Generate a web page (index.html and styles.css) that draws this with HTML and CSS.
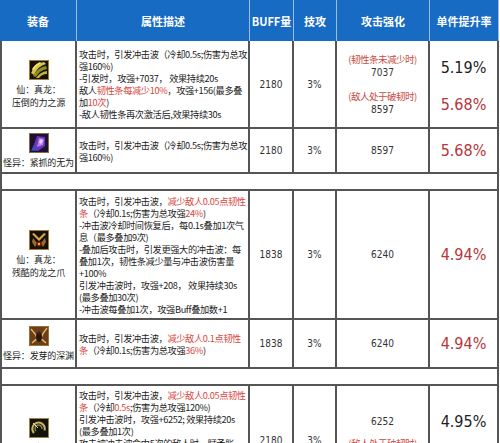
FILE: index.html
```html
<!DOCTYPE html>
<html lang="zh-CN">
<head>
<meta charset="utf-8">
<title>装备属性对比</title>
<link rel="stylesheet" href="styles.css">
</head>
<body>
<div class="page">
<table class="sheet">
  <colgroup>
    <col class="c-eq"><col class="c-desc"><col class="c-buff"><col class="c-skill"><col class="c-atk"><col class="c-rate">
  </colgroup>
  <thead>
    <tr>
      <th>装备</th><th>属性描述</th><th>BUFF量</th><th>技攻</th><th>攻击强化</th><th>单件提升率</th>
    </tr>
  </thead>
  <tbody>
    <tr class="r1">
      <td class="eq">
        <svg class="icon" viewBox="0 0 20 20"><rect x="0.5" y="0.5" width="19" height="19" fill="#16120a" stroke="#a2802e"/><path d="M2 13 Q7 3 15 2 L17 4 Q9 6 5 15 Z" fill="#d8c445"/><path d="M4 16 Q9 7 17 6 L18 9 Q11 10 7 17 Z" fill="#8f8c25"/><path d="M7 18 Q11 12 18 11 L18 14 Q13 14 10 18 Z" fill="#c7b23a"/><path d="M3 9 Q6 4 11 2 L12 3 Q7 6 4 11 Z" fill="#f0e27a"/></svg>
        <div class="name">仙：真龙：<br>压倒的力之源</div>
      </td>
      <td class="desc">攻击时，引发冲击波（冷却0.5s;伤害为总攻<br>强160%)<br>-引发时，攻强+7037， 效果持续20s<br>敌人<span class="hl">韧性条每减少10%</span>，攻强+156(最多叠<br>加<span class="hl">10次</span>)<br>-敌人韧性条再次激活后,效果持续30s</td>
      <td class="num">2180</td>
      <td class="num">3%</td>
      <td class="atk">
        <div class="stack">
          <div class="grp"><div class="note">(韧性条未减少时)</div><div class="val">7037</div></div>
          <div class="grp"><div class="note">(敌人处于破韧时)</div><div class="val">8597</div></div>
        </div>
      </td>
      <td class="rate">
        <div class="pcts"><div class="pct">5.19%</div><div class="pct up">5.68%</div></div>
      </td>
    </tr>
    <tr class="r2">
      <td class="eq">
        <svg class="icon" viewBox="0 0 20 20"><rect x="0.5" y="0.5" width="19" height="19" fill="#1d1132" stroke="#8a6a3e"/><polygon points="3,17 8,3 16,4 16,13 9,18" fill="#6d34b8"/><polygon points="8,14 10,5 15,6 14,12" fill="#b883ee"/><polygon points="10,9 12,6 14,8 12,11" fill="#e8d2ff"/><polygon points="2,18 5,12 9,17" fill="#3b4fc8"/></svg>
        <div class="name">怪异：紧抓的无为</div>
      </td>
      <td class="desc">攻击时，引发冲击波（冷却0.5s;伤害为总攻<br>强160%)</td>
      <td class="num">2180</td>
      <td class="num">3%</td>
      <td class="num">8597</td>
      <td class="rate"><div class="pct up">5.68%</div></td>
    </tr>
    <tr class="gap"><td colspan="6"></td></tr>
    <tr class="r3">
      <td class="eq">
        <svg class="icon" viewBox="0 0 20 20"><rect x="0.5" y="0.5" width="19" height="19" fill="#16100a" stroke="#a47a30"/><path d="M3 4 L10 11 L17 4 L15 3 L10 8 L5 3 Z" fill="#d9a441"/><path d="M4 8 L8 13 L6 17 L3 12 Z" fill="#9a6a26"/><path d="M16 8 L12 13 L14 17 L17 12 Z" fill="#9a6a26"/><circle cx="10" cy="14" r="2.6" fill="#7a1a10"/><circle cx="10" cy="14" r="1.2" fill="#e0b050"/></svg>
        <div class="name">仙：真龙：<br>残酷的龙之爪</div>
      </td>
      <td class="desc">攻击时，引发冲击波，<span class="hl">减少敌人0.05点韧性<br>条</span>（冷却0.1s;伤害为总攻强<span class="hl">24%</span>)<br>-冲击波冷却时间恢复后，每0.1s叠加1次气<br>息（最多叠加9次)<br>-叠加后攻击时，引发更强大的冲击波：每<br>叠加1次，韧性条减少量与冲击波伤害量<br>+100%<br>引发冲击波时，攻强+208， 效果持续30s<br>(最多叠加30次)<br>-冲击波每叠加1次，攻强Buff叠加数+1</td>
      <td class="num">1838</td>
      <td class="num">3%</td>
      <td class="num">6240</td>
      <td class="rate"><div class="pct up">4.94%</div></td>
    </tr>
    <tr class="r4">
      <td class="eq">
        <svg class="icon" viewBox="0 0 20 20"><rect x="0.5" y="0.5" width="19" height="19" fill="#6b3f1c" stroke="#9a7232"/><path d="M2 3 Q7 8 9 14 M18 2 Q13 8 11 14 M3 17 Q7 13 10 12 M17 17 Q13 13 10 12" stroke="#e8b860" stroke-width="1.4" fill="none"/><ellipse cx="10" cy="11" rx="3" ry="5" fill="#26170c"/><circle cx="10" cy="7" r="1.6" fill="#3a2414"/></svg>
        <div class="name">怪异：发芽的深渊</div>
      </td>
      <td class="desc">攻击时，引发冲击波，<span class="hl">减少敌人0.1点韧性<br>条</span>（冷却0.1s;伤害为总攻强<span class="hl">36%</span>)</td>
      <td class="num">1838</td>
      <td class="num">3%</td>
      <td class="num">6240</td>
      <td class="rate"><div class="pct up">4.94%</div></td>
    </tr>
    <tr class="gap"><td colspan="6"></td></tr>
    <tr class="r5">
      <td class="eq">
        <svg class="icon" viewBox="0 0 20 20"><rect x="0.5" y="0.5" width="19" height="19" fill="#13120c" stroke="#9c8442"/><path d="M5 15 A6.2 6.2 0 1 1 15.5 12.5" stroke="#cbb060" stroke-width="2" fill="none"/><path d="M7 13 A3.5 3.5 0 1 1 13 11" stroke="#7e8a4a" stroke-width="1.4" fill="none"/><path d="M4 5 L9 10" stroke="#e6d596" stroke-width="1"/></svg>
        <div class="name">仙：真龙：</div>
      </td>
      <td class="desc">攻击时，引发冲击波，<span class="hl">减少敌人0.05点韧性<br>条</span>（冷却<span class="hl">0.5s</span>;伤害为总攻强120%)<br>引发冲击波时，攻强+6252; 效果持续20s<br>(最多叠加1次)<br>攻击被冲击波命中5次的敌人时，赋予胀</td>
      <td class="num">2180</td>
      <td class="num">3%</td>
      <td class="atk"><div class="val">6252</div><div class="note later">(敌人处于破韧时)</div></td>
      <td class="rate"><div class="pct">4.95%</div></td>
    </tr>
  </tbody>
</table>
</div>
</body>
</html>
```

FILE: styles.css
```css
html, body {
  margin: 0;
  padding: 0;
  background: #ffffff;
}

.page {
  width: 500px;
  height: 443px;
  overflow: hidden;
  font-family: "Noto Sans CJK SC", "Noto Sans", sans-serif;
  color: #222222;
}

.sheet {
  border-collapse: separate;
  border-spacing: 0;
  table-layout: fixed;
  width: 499px;
}

.c-eq { width: 77px; }
.c-desc { width: 173px; }
.c-buff { width: 44px; }
.c-skill { width: 43px; }
.c-atk { width: 93px; }
.c-rate { width: 69px; }

.sheet th {
  height: 41px;
  padding: 0;
  background: #176bc3;
  color: #ffffff;
  font-size: 11px;
  font-weight: bold;
  text-align: center;
  vertical-align: middle;
  border-right: 1px solid #9bbde6;
  white-space: nowrap;
}

.sheet td {
  padding: 0;
  text-align: center;
  vertical-align: middle;
  border-right: 2px solid #555555;
  border-bottom: 2px solid #555555;
}

.sheet td.eq,
.gap td {
  border-left: 2px solid #555555;
}

.r1 { height: 88px; }
.r2 { height: 45px; }
.gap { height: 17px; }
.r3 { height: 129px; }
.r4 { height: 49px; }
.r5 { height: 112px; }

.icon {
  display: block;
  width: 20px;
  height: 20px;
  margin: 0 auto 3px;
}

.name {
  font-size: 9px;
  letter-spacing: -0.15px;
  line-height: 13px;
  white-space: nowrap;
}

.desc {
  text-align: left !important;
  padding-left: 2px !important;
  font-size: 9.2px;
  letter-spacing: -0.35px;
  line-height: 12px;
  white-space: nowrap;
  color: #222222;
}

.hl { color: #d9453d; }

.num,
.val {
  font-family: "DejaVu Sans Condensed", "DejaVu Sans", sans-serif;
  font-stretch: condensed;
  font-size: 10px;
  color: #333333;
}

.val { line-height: 13px; }

.stack {
  display: flex;
  flex-direction: column;
  gap: 11px;
}

.note {
  font-size: 9.5px;
  letter-spacing: -0.5px;
  line-height: 13px;
  color: #c94a42;
  white-space: nowrap;
}

.pcts {
  display: flex;
  flex-direction: column;
  gap: 19px;
  padding-top: 5px;
}

.pct {
  font-family: "Liberation Sans Narrow", "DejaVu Sans Condensed", sans-serif;
  font-stretch: condensed;
  font-size: 16px;
  line-height: 18px;
  color: #1e1e1e;
}

.pct.up { color: #b8353a; }

/* last row: cut by the window, content aligned from the top */
.r5 td { vertical-align: top; }
.r5 td.eq { padding-top: 32px; }
.r5 td.desc { padding-top: 3px; }
.r5 td.num { padding-top: 49px; line-height: 12px; }
.r5 td.atk { padding-top: 30px; }
.r5 .val { line-height: 12px; }
.r5 .note.later { margin-top: 9px; }
.r5 td.rate { padding-top: 27px; }
```
